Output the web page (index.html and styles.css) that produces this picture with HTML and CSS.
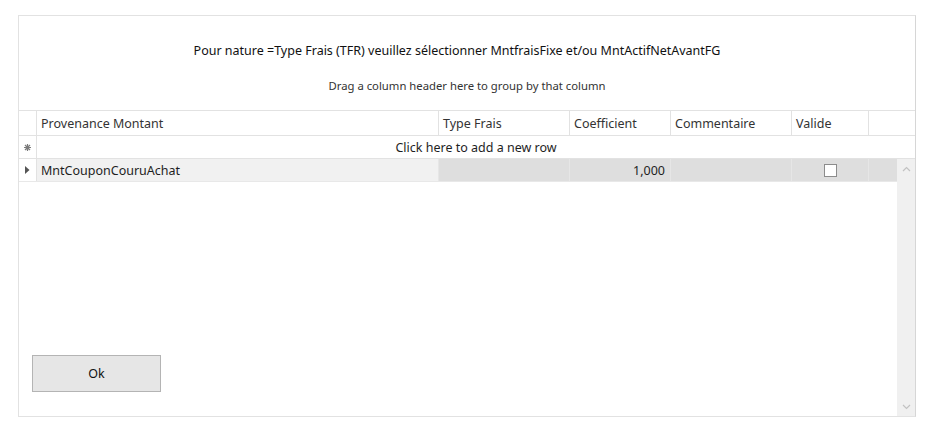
FILE: index.html
```html
<!DOCTYPE html>
<html lang="fr">
<head>
  <meta charset="UTF-8" />
  <title>Provenance Montant</title>
  <link rel="stylesheet" href="styles.css">
</head>
<body>
  <div class="frame">
    <div class="caption">
      <div class="title">Pour nature =Type Frais (TFR) veuillez sélectionner MntfraisFixe et/ou MntActifNetAvantFG</div>
      <div class="group-hint">Drag a column header here to group by that column</div>
    </div>

    <div class="grid">
      <div class="row head">
        <div class="cell ind"></div>
        <div class="cell">Provenance Montant</div>
        <div class="cell">Type Frais</div>
        <div class="cell">Coefficient</div>
        <div class="cell">Commentaire</div>
        <div class="cell">Valide</div>
        <div class="cell last"></div>
      </div>

      <div class="row new-row">
        <div class="cell ind">
          <svg width="7" height="7" viewBox="0 0 7 7"><path d="M3.5 0v7M0 3.5h7M1 1l5 5M6 1L1 6" stroke="#7a7a7a" stroke-width="1.2"/></svg>
        </div>
        <div class="cell add">Click here to add a new row</div>
      </div>

      <div class="body">
        <div class="rows">
          <div class="row data">
            <div class="cell ind">
              <svg width="5" height="8" viewBox="0 0 5 8"><path d="M0 0l4.5 4L0 8z" fill="#555"/></svg>
            </div>
            <div class="cell first">MntCouponCouruAchat</div>
            <div class="cell"></div>
            <div class="cell num">1,000</div>
            <div class="cell"></div>
            <div class="cell check"><span class="box"></span></div>
            <div class="cell last"></div>
          </div>

          <div class="actions">
            <button class="ok">Ok</button>
          </div>
        </div>

        <div class="scroll">
          <svg width="9" height="6" viewBox="0 0 9 6"><path d="M1 5l3.5-3.5L8 5" fill="none" stroke="#c2c2c2" stroke-width="1.2"/></svg>
          <svg width="9" height="6" viewBox="0 0 9 6"><path d="M1 1l3.5 3.5L8 1" fill="none" stroke="#c2c2c2" stroke-width="1.2"/></svg>
        </div>
      </div>
    </div>
  </div>
</body>
</html>
```

FILE: styles.css
```css
body {
  margin: 0;
  padding: 15px 0 0 18px;
  font-family: 'Noto Sans', 'Open Sans', sans-serif;
  color: #1e1e1e;
  background: white;
}

.frame {
  width: 898px;
  height: 402px;
  box-sizing: border-box;
  border: 1px solid #e2e2e2;
  border-right-color: #d6d6d6;
  display: flex;
  flex-direction: column;
}

.caption {
  height: 94px;
  display: flex;
  flex-direction: column;
  align-items: center;
}

.title {
  margin-top: 26px;
  padding-right: 20px;
  font-size: 12.5px;
  color: #111;
}

.group-hint {
  margin-top: 19px;
  font-size: 11.3px;
  color: #333;
}

.grid {
  flex: 1;
  display: flex;
  flex-direction: column;
  border-top: 1px solid #e2e2e2;
}

.row {
  display: grid;
  grid-template-columns: 18px 402px 131px 101px 121px 77px 1fr;
  font-size: 12.5px;
}

.cell {
  border-right: 1px solid #e2e2e2;
  display: flex;
  align-items: center;
  padding-left: 4px;
  white-space: nowrap;
}

.cell.last {
  border-right: none;
}

.cell.ind {
  padding-left: 0;
  justify-content: center;
}

.head {
  height: 24px;
  border-bottom: 1px solid #e2e2e2;
  color: #333;
}

.new-row {
  height: 22px;
  border-bottom: 1px solid #e2e2e2;
  grid-template-columns: 18px 1fr;
}

.new-row .add {
  border-right: none;
  justify-content: center;
  padding-left: 0;
}

.body {
  flex: 1;
  display: flex;
}

.rows {
  flex: 1;
  display: flex;
  flex-direction: column;
}

.data {
  height: 22px;
  border-bottom: 1px solid #e8e8e8;
  background: #dedede;
}

.data .cell {
  border-right-color: #e6e6e6;
}

.data .ind {
  background: white;
  border-right-color: #e2e2e2;
}

.data .first {
  background: #f1f1f1;
}

.data .num {
  justify-content: flex-end;
  padding-right: 5px;
}

.data .check {
  justify-content: center;
  padding-left: 0;
}

.box {
  width: 11px;
  height: 11px;
  background: white;
  border: 1px solid #8c8c8c;
}

.actions {
  margin-top: auto;
  padding: 0 0 24px 13px;
}

.ok {
  width: 129px;
  height: 37px;
  font-family: 'Noto Sans', 'Open Sans', sans-serif;
  font-size: 12.5px;
  color: #111;
  background: #e6e6e6;
  border: 1px solid #b4b4b4;
}

.scroll {
  width: 18px;
  background: #f0f0f0;
  display: flex;
  flex-direction: column;
  justify-content: space-between;
  align-items: center;
  padding: 7px 0 6px;
}
```
